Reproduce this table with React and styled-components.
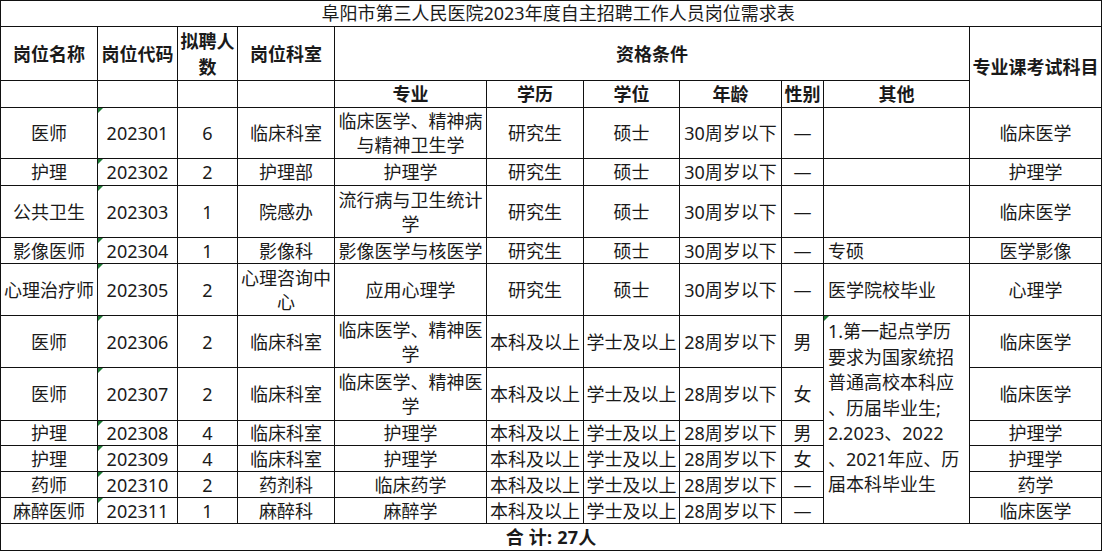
import React from 'react';
import styled, { createGlobalStyle } from 'styled-components';

const GlobalStyle = createGlobalStyle`
  html, body { margin: 0; padding: 0; background: #ffffff; }
  body { font-family: "Noto Sans", "Noto Sans CJK SC", sans-serif; color: #1a1a1a; }
`;

const Sheet = styled.table`
  border-collapse: collapse;
  table-layout: fixed;
  width: 1102px;
  font-family: "Noto Sans", "Noto Sans CJK SC", sans-serif;
  font-size: 18px;
  color: #1a1a1a;
`;

const Col = styled.col`
  width: ${(p) => p.$w}px;
`;

const Row = styled.tr`
  height: ${(p) => p.$h}px;
`;

const Cell = styled.td`
  border: 1px solid #111;
  padding-left: ${(p) => (p.$align === 'left' ? '4px' : '2px')};
  padding-right: 2px;
  padding-top: ${(p) => (p.$valign === 'top' ? '3px' : '0')};
  padding-bottom: 0;
  text-align: ${(p) => p.$align || 'center'};
  vertical-align: ${(p) => p.$valign || 'middle'};
  line-height: ${(p) => (p.$valign === 'top' ? '25.5px' : '24px')};
  font-weight: ${(p) => (p.$bold ? 700 : 400)};
  white-space: ${(p) => (p.$nowrap ? 'nowrap' : 'normal')};
  position: relative;
  overflow: hidden;

  &::before {
    content: '';
    display: ${(p) => (p.$flag ? 'block' : 'none')};
    position: absolute;
    top: 0;
    left: 0;
    width: 0;
    height: 0;
    border-top: 5px solid #1d7b35;
    border-right: 5px solid transparent;
  }
`;

const HeadCell = styled(Cell)`
  font-weight: 700;
  line-height: 26px;
`;

const TitleCell = styled(Cell)`
  font-weight: 400;
  line-height: 23px;
  padding-left: 16px;
`;

const TotalCell = styled(Cell)`
  font-weight: 700;
  letter-spacing: 0.2px;
`;

const cols = [97, 80, 60, 97, 152, 97, 96, 102, 42, 146, 132];

const rows = [
  { name: '医师', code: '202301', n: '6', dept: '临床科室', major: '临床医学、精神病与精神卫生学', edu: '研究生', deg: '硕士', age: '30周岁以下', sex: '—', other: '', exam: '临床医学', h: 51 },
  { name: '护理', code: '202302', n: '2', dept: '护理部', major: '护理学', edu: '研究生', deg: '硕士', age: '30周岁以下', sex: '—', other: '', exam: '护理学', h: 27 },
  { name: '公共卫生', code: '202303', n: '1', dept: '院感办', major: '流行病与卫生统计学', edu: '研究生', deg: '硕士', age: '30周岁以下', sex: '—', other: '', exam: '临床医学', h: 52 },
  { name: '影像医师', code: '202304', n: '1', dept: '影像科', major: '影像医学与核医学', edu: '研究生', deg: '硕士', age: '30周岁以下', sex: '—', other: '专硕', exam: '医学影像', h: 26 },
  { name: '心理治疗师', code: '202305', n: '2', dept: '心理咨询中心', major: '应用心理学', edu: '研究生', deg: '硕士', age: '30周岁以下', sex: '—', other: '医学院校毕业', exam: '心理学', h: 52 },
  { name: '医师', code: '202306', n: '2', dept: '临床科室', major: '临床医学、精神医学', edu: '本科及以上', deg: '学士及以上', age: '28周岁以下', sex: '男', merged: true, exam: '临床医学', h: 52 },
  { name: '医师', code: '202307', n: '2', dept: '临床科室', major: '临床医学、精神医学', edu: '本科及以上', deg: '学士及以上', age: '28周岁以下', sex: '女', skip: true, exam: '临床医学', h: 53 },
  { name: '护理', code: '202308', n: '4', dept: '临床科室', major: '护理学', edu: '本科及以上', deg: '学士及以上', age: '28周岁以下', sex: '男', skip: true, exam: '护理学', h: 25 },
  { name: '护理', code: '202309', n: '4', dept: '临床科室', major: '护理学', edu: '本科及以上', deg: '学士及以上', age: '28周岁以下', sex: '女', skip: true, exam: '护理学', h: 26 },
  { name: '药师', code: '202310', n: '2', dept: '药剂科', major: '临床药学', edu: '本科及以上', deg: '学士及以上', age: '28周岁以下', sex: '—', skip: true, exam: '药学', h: 26 },
  { name: '麻醉医师', code: '202311', n: '1', dept: '麻醉科', major: '麻醉学', edu: '本科及以上', deg: '学士及以上', age: '28周岁以下', sex: '—', skip: true, exam: '临床医学', h: 26 },
];

const mergedLines = [
  '1.第一起点学历',
  '要求为国家统招',
  '普通高校本科应',
  '、历届毕业生;',
  '2.2023、2022',
  '、2021年应、历',
  '届本科毕业生',
];

export default function App() {
  return (
    <>
      <GlobalStyle />
      <Sheet>
        <colgroup>
          {cols.map((w, i) => (
            <Col key={i} $w={w} />
          ))}
        </colgroup>
        <tbody>
          <Row $h={26}>
            <TitleCell colSpan={11}>阜阳市第三人民医院2023年度自主招聘工作人员岗位需求表</TitleCell>
          </Row>
          <Row $h={54}>
            <HeadCell>岗位名称</HeadCell>
            <HeadCell>岗位代码</HeadCell>
            <HeadCell>拟聘人数</HeadCell>
            <HeadCell>岗位科室</HeadCell>
            <HeadCell colSpan={6}>资格条件</HeadCell>
            <HeadCell rowSpan={2} $nowrap>专业课考试科目</HeadCell>
          </Row>
          <Row $h={27}>
            <HeadCell />
            <HeadCell />
            <HeadCell />
            <HeadCell />
            <HeadCell>专业</HeadCell>
            <HeadCell>学历</HeadCell>
            <HeadCell>学位</HeadCell>
            <HeadCell>年龄</HeadCell>
            <HeadCell>性别</HeadCell>
            <HeadCell>其他</HeadCell>
          </Row>
          {rows.map((r) => (
            <Row key={r.code} $h={r.h}>
              <Cell $nowrap>{r.name}</Cell>
              <Cell $flag>{r.code}</Cell>
              <Cell>{r.n}</Cell>
              <Cell>{r.dept}</Cell>
              <Cell>{r.major}</Cell>
              <Cell $nowrap>{r.edu}</Cell>
              <Cell $nowrap>{r.deg}</Cell>
              <Cell $nowrap>{r.age}</Cell>
              <Cell>{r.sex}</Cell>
              {r.merged ? (
                <Cell rowSpan={6} $align="left" $valign="top" $nowrap $flag>
                  {mergedLines.map((l, i) => (
                    <React.Fragment key={i}>
                      {l}
                      {i < mergedLines.length - 1 && <br />}
                    </React.Fragment>
                  ))}
                </Cell>
              ) : r.skip ? null : (
                <Cell $align="left" $nowrap>{r.other}</Cell>
              )}
              <Cell $nowrap>{r.exam}</Cell>
            </Row>
          ))}
          <Row $h={27}>
            <TotalCell colSpan={11}>合 计: 27人</TotalCell>
          </Row>
        </tbody>
      </Sheet>
    </>
  );
}
